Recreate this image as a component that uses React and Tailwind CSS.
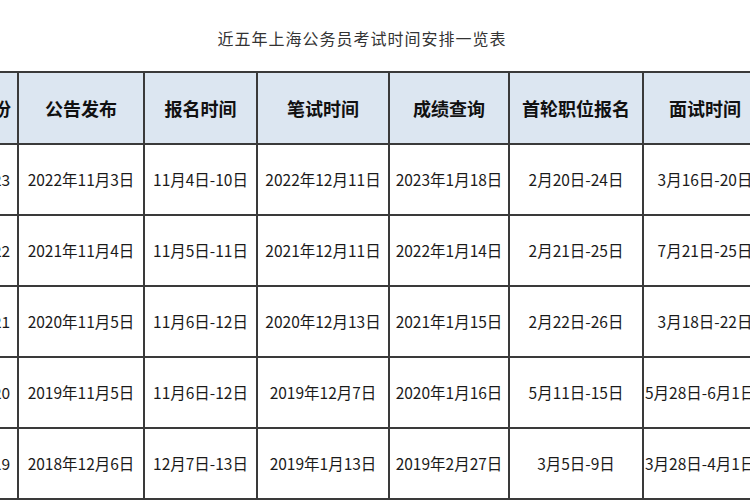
import React from "react";

const cols = [
  { name: "年份", w: 50 },
  { name: "公告发布", w: 126 },
  { name: "报名时间", w: 113 },
  { name: "笔试时间", w: 132 },
  { name: "成绩查询", w: 120 },
  { name: "首轮职位报名", w: 134 },
  { name: "面试时间", w: 124 },
];

const rows = [
  ["2023", "2022年11月3日", "11月4日-10日", "2022年12月11日", "2023年1月18日", "2月20日-24日", "3月16日-20日"],
  ["2022", "2021年11月4日", "11月5日-11日", "2021年12月11日", "2022年1月14日", "2月21日-25日", "7月21日-25日"],
  ["2021", "2020年11月5日", "11月6日-12日", "2020年12月13日", "2021年1月15日", "2月22日-26日", "3月18日-22日"],
  ["2020", "2019年11月5日", "11月6日-12日", "2019年12月7日", "2020年1月16日", "5月11日-15日", "5月28日-6月1日"],
  ["2019", "2018年12月6日", "12月7日-13日", "2019年1月13日", "2019年2月27日", "3月5日-9日", "3月28日-4月1日"],
];

export default function App() {
  return (
    <div
      className="w-[750px] h-[500px] overflow-hidden bg-white"
      style={{ fontFamily: '"Noto Sans CJK SC", "Noto Sans", sans-serif' }}
    >
      {/* title */}
      <div className="h-[71px] flex items-center justify-center pt-[5px] pr-[26px]">
        <h1 className="text-[16px] tracking-[1px] text-[#333] font-normal">
          近五年上海公务员考试时间安排一览表
        </h1>
      </div>

      <table className="ml-[-33px] border-collapse table-fixed w-[799px]">
        <colgroup>
          {cols.map((c) => (
            <col key={c.name} style={{ width: c.w }} />
          ))}
        </colgroup>
        <thead>
          <tr className="h-[72px] bg-[#dce6f1]">
            {cols.map((c) => (
              <th
                key={c.name}
                className="border-2 border-[#3a3a3a] text-[18px] font-bold text-[#111] whitespace-nowrap overflow-hidden"
              >
                {c.name}
              </th>
            ))}
          </tr>
        </thead>
        <tbody>
          {rows.map((r) => (
            <tr key={r[0]} className="h-[71px]">
              {r.map((cell, i) => (
                <td
                  key={i}
                  className={`border-2 border-[#3a3a3a] text-[15.5px] text-[#1a1a1a] whitespace-nowrap overflow-hidden ${
                    i === 6 && cell.length > 9 ? "text-left pl-[1px]" : "text-center"
                  }`}
                >
                  {cell}
                </td>
              ))}
            </tr>
          ))}
        </tbody>
      </table>
    </div>
  );
}
